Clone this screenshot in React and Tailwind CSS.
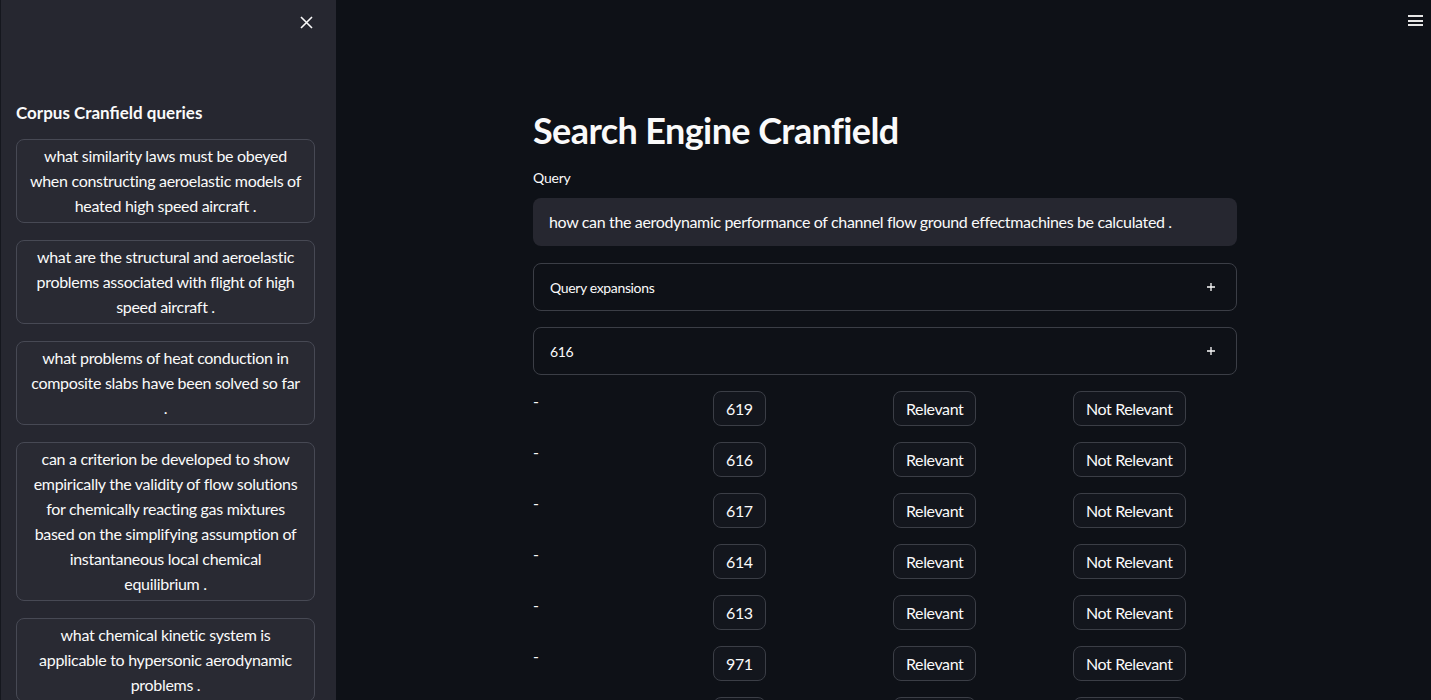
import React from 'react';

const queries = [
  'what similarity laws must be obeyed when constructing aeroelastic models of heated high speed aircraft .',
  'what are the structural and aeroelastic problems associated with flight of high speed aircraft .',
  'what problems of heat conduction in composite slabs have been solved so far .',
  'can a criterion be developed to show empirically the validity of flow solutions for chemically reacting gas mixtures based on the simplifying assumption of instantaneous local chemical equilibrium\u00a0.',
  'what chemical kinetic system is applicable to hypersonic aerodynamic problems .',
  'what theoretical and experimental guides do we have as to turbulent couette flow behaviour .',
];

const results = ['619', '616', '617', '614', '613', '971', '618'];

function Plus() {
  return (
    <svg width="10" height="10" viewBox="0 0 10 10" fill="none" stroke="#fafafa" strokeWidth="1.3">
      <path d="M5 1v8M1 5h8" />
    </svg>
  );
}

function Button({ children }) {
  return (
    <button className="rounded-lg border border-[#3b3e46] bg-[#13161d] px-3 py-[4px] text-[16px] leading-[25px] tracking-[-0.4px] text-[#fafafa]">
      {children}
    </button>
  );
}

function Expander({ label }) {
  return (
    <div className="flex h-[48px] items-center justify-between rounded-lg border border-[#3b3e46] pl-4 pr-5 text-[14px] tracking-[-0.35px] text-[#fafafa]">
      <span>{label}</span>
      <Plus />
    </div>
  );
}

export default function App() {
  return (
    <div
      className="flex h-[700px] w-[1431px] overflow-hidden bg-[#0e1117] text-[#fafafa]"
      style={{ fontFamily: 'Lato, "Noto Sans", sans-serif' }}
    >
      <aside className="flex w-[336px] shrink-0 flex-col border-l border-[#15171e] bg-[#262730]">
        <div className="flex h-[29px] shrink-0 items-end justify-end pr-[23px]">
          <svg width="13" height="13" viewBox="0 0 13 13" fill="none" stroke="#fafafa" strokeWidth="1.6">
            <path d="M1 1l11 11M12 1L1 12" />
          </svg>
        </div>
        <h2 className="mt-[71px] shrink-0 pl-[15px] text-[17px] font-bold text-[#fafafa]">Corpus Cranfield queries</h2>
        <div className="mt-[13px] flex shrink-0 flex-col gap-[17px] pl-[15px] pr-[21px]">
          {queries.map((q) => (
            <button
              key={q}
              className="rounded-lg border border-[#474954] bg-[#292a33] px-3 py-[3.5px] text-center text-[16px] leading-[25px] tracking-[-0.3px] text-[#fafafa]"
            >
              {q}
            </button>
          ))}
        </div>
      </aside>

      <main className="relative flex-1">
        <div className="absolute right-[8px] top-[15px] flex w-[15px] flex-col gap-[2.5px]">
          <span className="h-[2px] bg-[#e6e6e6]" />
          <span className="h-[2px] bg-[#e6e6e6]" />
          <span className="h-[2px] bg-[#e6e6e6]" />
        </div>

        <div className="ml-[197px] w-[704px] pt-[106px]">
          <h1 className="text-[36px] font-bold leading-[48px] tracking-[-0.6px]">Search Engine Cranfield</h1>
          <div className="mt-[14px] text-[14px] leading-[20px] tracking-[-0.2px]">Query</div>
          <div className="mt-[10px] flex h-[48px] items-center rounded-lg bg-[#262730] px-4 text-[16px] tracking-[-0.35px]">
            how can the aerodynamic performance of channel flow ground effectmachines be calculated .
          </div>
          <div className="mt-[17px] flex flex-col gap-4">
            <Expander label="Query expansions" />
            <Expander label="616" />
            {results.map((r, i) => (
              <div key={i} className="grid grid-cols-4 gap-4">
                <div className="text-[16px] leading-[20px]">-</div>
                <div>
                  <Button>{r}</Button>
                </div>
                <div>
                  <Button>Relevant</Button>
                </div>
                <div>
                  <Button>Not Relevant</Button>
                </div>
              </div>
            ))}
          </div>
        </div>
      </main>
    </div>
  );
}
